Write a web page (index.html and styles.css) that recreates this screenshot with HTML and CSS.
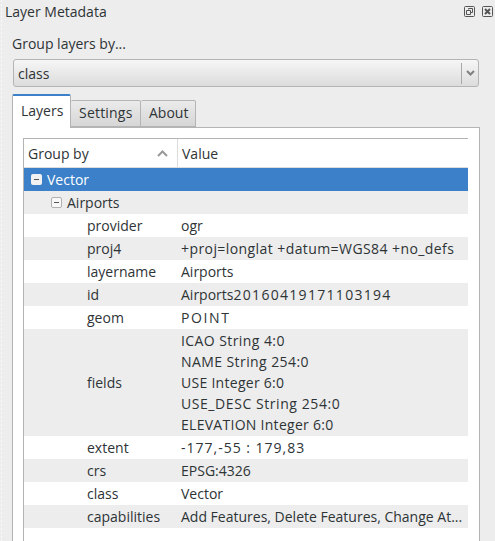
FILE: index.html
```html
<!DOCTYPE html>
<html>
<head>
    <title>Layer Metadata</title>
    <meta charset="utf-8">
    <link rel="stylesheet" href="styles.css">
</head>
<body>
    <section class="dock">
        <header class="titlebar">
            <span class="title">Layer Metadata</span>
            <span class="title-btns">
                <svg width="12" height="11" viewBox="0 0 12 11" fill="none" stroke="#555"><rect x="0.5" y="0.5" width="10" height="10" rx="1"/><path d="M4.500 3.500V2.500H8.500V6.500H6.500M2.500 4.500H6.500V8.500H2.500Z"/></svg>
                <svg width="11" height="11" viewBox="0 0 11 11" fill="none" stroke="#555"><rect x="0.5" y="0.5" width="10" height="10" rx="1"/><path d="M3 3L8 8M8 3L3 8" stroke-width="2"/></svg>
            </span>
        </header>
        <div class="content">
            <label class="group-label">Group layers by...</label>
            <div class="combo">
                <span class="combo-text">class</span>
                <span class="combo-arrow">
                    <svg width="9" height="6" viewBox="0 0 9 6" fill="none" stroke="#808080" stroke-width="2"><path d="M1 1L4.500 4.500L8 1"/></svg>
                </span>
            </div>
            <nav class="tabs">
                <span class="tab active">Layers</span>
                <span class="tab tab-settings">Settings</span>
                <span class="tab tab-about">About</span>
            </nav>
            <div class="pane">
                <div class="tree">
                    <div class="tree-head">
                        <div class="head-cell head-group">Group by
                            <svg width="11" height="7" viewBox="0 0 11 7" fill="none" stroke="#999" stroke-width="2"><path d="M1 6L5.500 1.500L10 6"/></svg>
                        </div>
                        <div class="head-cell head-value">Value</div>
                    </div>
                    <div class="row selected">
                        <span class="expander root-exp"><i></i></span>Vector
                    </div>
                    <div class="row alt">
                        <span class="expander layer-exp"><i></i></span>Airports
                    </div>
                    <div class="row"><span class="key">provider</span><span class="val">ogr</span></div>
                    <div class="row alt"><span class="key">proj4</span><span class="val wide-s">+proj=longlat +datum=WGS84 +no_defs</span></div>
                    <div class="row"><span class="key">layername</span><span class="val">Airports</span></div>
                    <div class="row alt"><span class="key">id</span><span class="val">Airports<span class="digits">20160419171103194</span></span></div>
                    <div class="row"><span class="key">geom</span><span class="val wide-l">POINT</span></div>
                    <div class="row alt multi"><span class="key">fields</span><span class="val wide-s">ICAO String 4:0<br>NAME String 254:0<br><span class="wide-xs">USE Integer 6:0</span><br><span class="wide-m">USE_DESC String 254:0</span><br><span class="wide-xs">ELEVATION Integer 6:0</span></span></div>
                    <div class="row"><span class="key">extent</span><span class="val wide-xl">-177,-55 : 179,83</span></div>
                    <div class="row alt"><span class="key">crs</span><span class="val">EPSG:4326</span></div>
                    <div class="row"><span class="key">class</span><span class="val">Vector</span></div>
                    <div class="row alt"><span class="key">capabilities</span><span class="val">Add Features, Delete Features, Change At...</span></div>
                </div>
            </div>
        </div>
    </section>
</body>
</html>
```

FILE: styles.css
```css
html, body {
    margin: 0;
    height: 100%;
    overflow: hidden;
}
body {
    background: #ededed;
    color: #2e3436;
    font-family: "Open Sans", sans-serif;
    font-size: 14px;
}
.dock {
    height: 541px;
    display: flex;
    flex-direction: column;
    /* dotted dock handle down the left edge */
    background: linear-gradient(#f9f9f9 50%, transparent 50%) 1px 0 / 1px 4px repeat-y;
}
.titlebar {
    height: 22px;
    flex: none;
    display: flex;
    align-items: center;
    justify-content: space-between;
    padding: 0 2px 0 5px;
}
.title-btns {
    display: flex;
    gap: 6px;
}
.title-btns svg {
    display: block;
}
.content {
    padding: 12px 15px 0 12px;
    flex: 1;
    display: flex;
    flex-direction: column;
    min-height: 0;
}
.group-label {
    line-height: 20px;
    margin-bottom: 5px;
}
.combo {
    height: 28px;
    flex: none;
    margin-left: 1px;
    margin-right: 1px;
    box-sizing: border-box;
    border: 1px solid #b4b4b4;
    border-radius: 3px;
    background: linear-gradient(#f6f6f6, #dcdcdc);
    display: flex;
    align-items: center;
    justify-content: space-between;
    padding-left: 4px;
}
.combo-arrow {
    width: 16px;
    height: 21px;
    border-left: 1px solid #a8a8a8;
    display: flex;
    align-items: center;
    justify-content: center;
}
.tabs {
    display: flex;
    margin-top: 7px;
    align-items: flex-end;
    height: 33px;
    flex: none;
}
.tab {
    height: 27px;
    box-sizing: border-box;
    border: 1px solid #b4b4b4;
    border-left-width: 0;
    border-radius: 2px 2px 0 0;
    background: linear-gradient(#ebebeb, #d6d6d6);
    padding: 0 8px;
    line-height: 23px;
}
.tab-settings {
    width: 70px;
    letter-spacing: 0.2px;
}
.tab-about {
    width: 55px;
}
.tab.active {
    width: 59px;
    height: 34px;
    background: #fff;
    border: 1px solid #b4b4b4;
    border-top: 2px solid #3b80c8;
    border-bottom: none;
    line-height: 30px;
    position: relative;
    top: 1px;
}
.pane {
    flex: 1;
    background: #fff;
    border: 1px solid #b4b4b4;
    border-bottom: none;
    padding: 10px 11px 0 10px;
    min-height: 0;
}
.tree {
    height: 100%;
    border-top: 1px solid #b4b4b4;
    border-left: 1px solid #b4b4b4;
    background: #fff;
}
.tree-head {
    height: 29px;
    display: flex;
    box-sizing: border-box;
    border-bottom: 1px solid #dcdcdc;
}
.head-cell {
    line-height: 28px;
    padding: 1px 0 0 4px;
}
.head-group {
    box-sizing: border-box;
    width: 154px;
    border-right: 1px solid #dcdcdc;
    display: flex;
    align-items: center;
    justify-content: space-between;
    padding-right: 9px;
}
.row {
    display: flex;
    height: 23px;
    line-height: 23px;
    align-items: center;
}
.row.alt {
    background: #ededed;
}
.row.selected {
    background: #3b80c8;
    color: #fff;
}
.row.multi {
    height: 107px;
    line-height: 21px;
}
.key {
    width: 157px;
    padding-left: 63px;
    box-sizing: border-box;
    flex: none;
}
.val {
    white-space: nowrap;
}
/* value text runs a little wider than the font gives */
.digits {
    letter-spacing: 1.3px;
}
.wide-xs {
    letter-spacing: 0.28px;
}
.wide-s {
    letter-spacing: 0.42px;
}
.wide-m {
    letter-spacing: 0.57px;
}
.wide-xl {
    letter-spacing: 1px;
}
.wide-l {
    letter-spacing: 1.6px;
}
.expander {
    width: 11px;
    height: 11px;
    box-sizing: border-box;
    display: flex;
    align-items: center;
    justify-content: center;
    border-radius: 2px;
    flex: none;
}
.expander i {
    width: 5px;
    height: 1px;
    background: #555;
    display: block;
}
.root-exp {
    background: #f2f2f2;
    margin: 0 5px 0 7px;
}
.layer-exp {
    border: 1px solid #b0b0b0;
    background: #f8f8f8;
    margin: 0 5px 0 27px;
}
```
